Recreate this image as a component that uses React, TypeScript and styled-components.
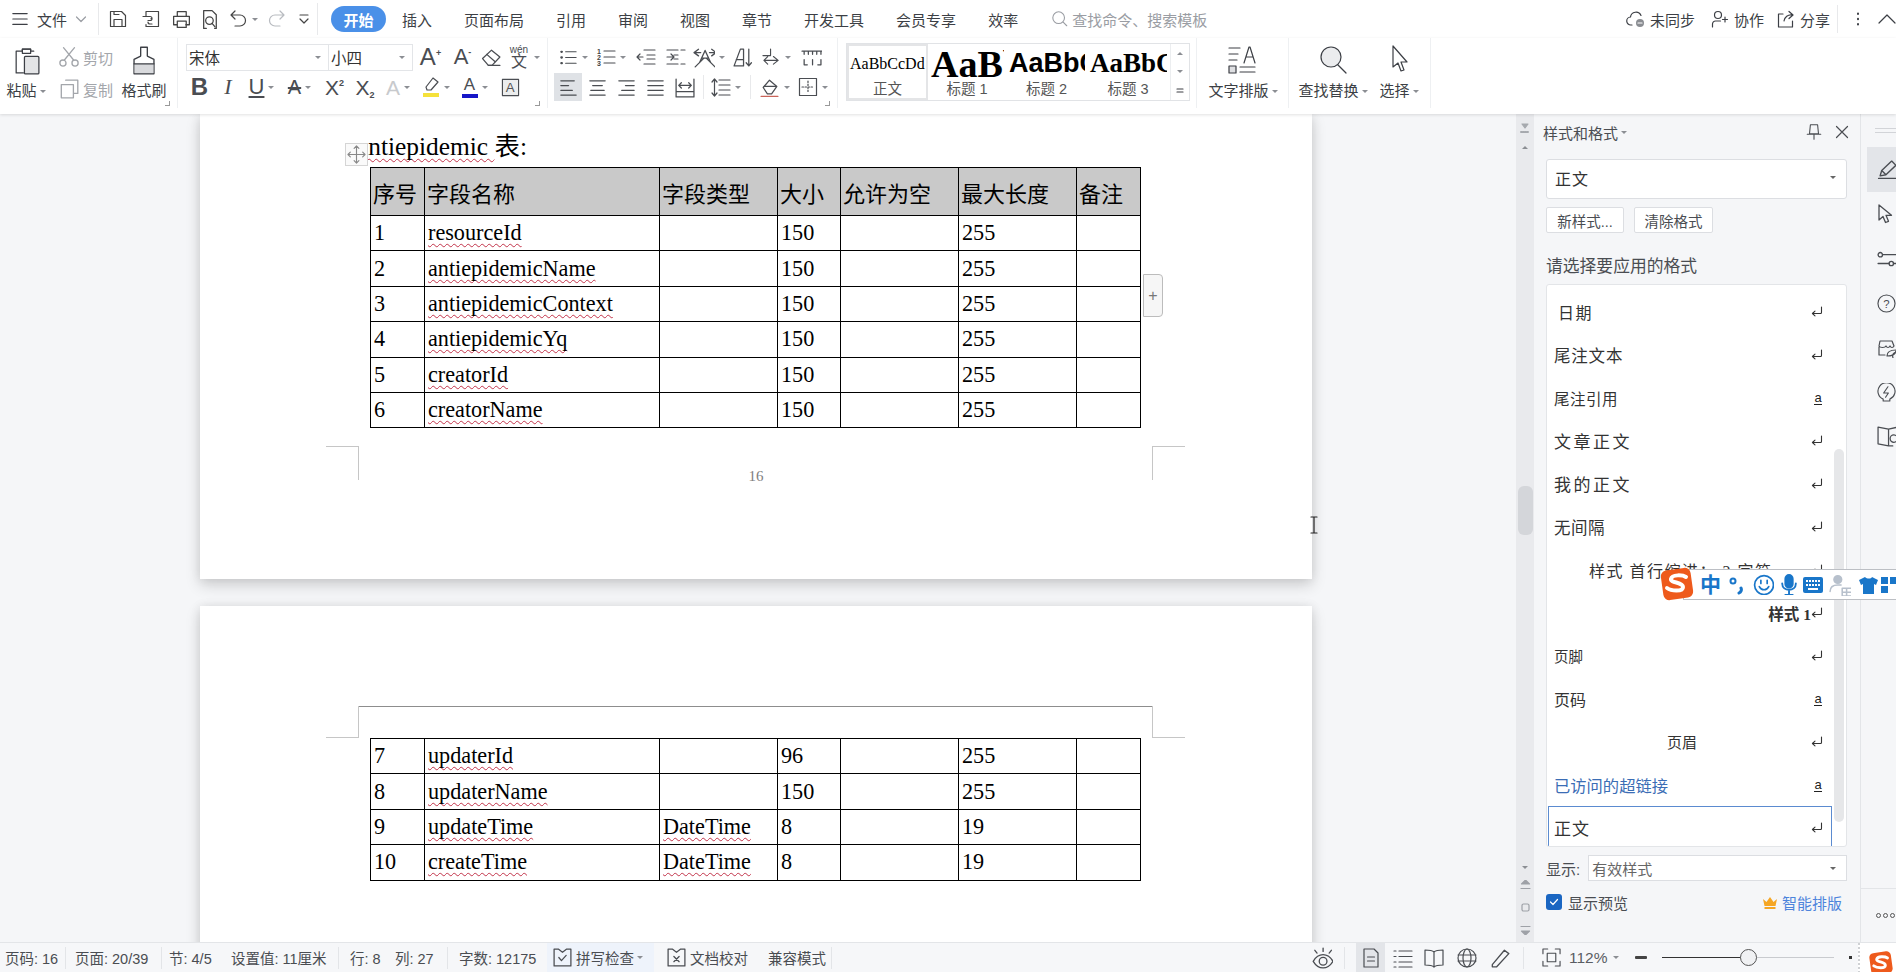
import React from 'react';
import styled, { createGlobalStyle } from 'styled-components';

const UI_FONT = '"Liberation Sans", "Noto Sans CJK SC", sans-serif';
const DOC_FONT = '"Liberation Serif", "Noto Sans CJK SC", serif';

const GlobalStyle = createGlobalStyle`
  html, body { margin: 0; padding: 0; background: #f5f6f8; }
  body { font-family: ${UI_FONT}; color: #3c3f45; }
  * { box-sizing: border-box; }
  svg { display: block; flex: none; }
  svg text { font-family: ${UI_FONT}; }
`;

const Window = styled.div`
  position: relative;
  width: 1896px;
  height: 972px;
  overflow: hidden;
  display: flex;
  flex-direction: column;
`;

/* ---------- title / tab bar ---------- */
const TabBar = styled.div`
  height: 38px;
  background: #fff;
  display: flex;
  align-items: center;
  font-size: 15px;
  color: #3c3f45;
  flex: none;
`;

const FileMenu = styled.div`
  width: 99px;
  height: 32px;
  padding-left: 11px;
  display: flex;
  align-items: center;
  gap: 8px;
  border-right: 1px solid #e8e9eb;
`;

const QuickTool = styled.div<{ $w: number; $muted?: boolean }>`
  width: ${p => p.$w}px;
  display: flex;
  align-items: center;
  justify-content: center;
  gap: 3px;
  color: ${p => (p.$muted ? '#b8bbc0' : '#444')};
`;

const QuickGroup = styled.div`
  display: flex;
  align-items: center;
  width: 219px;
  height: 32px;
  padding-left: 3px;
  border-right: 1px solid #e8e9eb;
`;

const ActiveTab = styled.div`
  margin-left: 13px;
  width: 55px;
  height: 26px;
  border-radius: 13px;
  background: #4a90e8;
  color: #fff;
  font-weight: 700;
  display: flex;
  align-items: center;
  justify-content: center;
`;

const Tab = styled.div`
  padding: 0 16px;
  white-space: nowrap;
`;

const SearchHint = styled.div`
  margin-left: 17px;
  display: flex;
  align-items: center;
  gap: 3px;
  color: #9a9da3;
`;

const TitleActions = styled.div`
  margin-left: auto;
  display: flex;
  align-items: center;
  height: 32px;
`;

const TitleAction = styled.div<{ $w: number }>`
  width: ${p => p.$w}px;
  display: flex;
  align-items: center;
  gap: 4px;
  white-space: nowrap;
`;

const TitleSep = styled.div`
  width: 1px;
  height: 28px;
  background: #e8e9eb;
  margin: 0 13px 0 8px;
`;

const TitleGap = styled.span`
  width: 13px;
`;

/* ---------- ribbon ---------- */
const Ribbon = styled.div`
  height: 76px;
  background: #fff;
  display: flex;
  flex: none;
  position: relative;
  z-index: 2;
  box-shadow: 0 1px 3px rgba(0, 0, 0, 0.12);
  font-size: 15px;
  color: #3c3f45;
`;

const RibbonGroup = styled.div<{ $w: number; $pad?: number }>`
  position: relative;
  width: ${p => p.$w}px;
  padding-left: ${p => p.$pad ?? 0}px;
  height: 70px;
  border-right: 1px solid #eef0f2;
  flex: none;
`;

const GroupCorner = styled.span`
  position: absolute;
  right: 7px;
  bottom: 2px;
  width: 5px;
  height: 5px;
  border-right: 1px solid #999;
  border-bottom: 1px solid #999;
`;

const ToolRows = styled.div`
  padding-top: 6px;
  display: flex;
  flex-direction: column;
  gap: 4px;
`;

const ToolRow = styled.div<{ $tall?: boolean }>`
  height: ${p => (p.$tall ? 70 : 26)}px;
  display: flex;
  align-items: ${p => (p.$tall ? 'flex-start' : 'center')};
`;

const Tool = styled.div<{ $w: number; $active?: boolean }>`
  width: ${p => p.$w}px;
  height: 28px;
  display: flex;
  align-items: center;
  justify-content: center;
  gap: 4px;
  color: #4a4d52;
  background: ${p => (p.$active ? '#dfe2e6' : 'transparent')};
  flex: none;
`;

const ToolSep = styled.div<{ $w: number }>`
  width: ${p => p.$w}px;
  height: 26px;
  position: relative;
  &::after {
    content: '';
    position: absolute;
    left: 50%;
    top: 1px;
    bottom: 1px;
    width: 1px;
    background: #e8e9eb;
  }
`;

const Caret = styled.span<{ $color?: string; $up?: boolean }>`
  width: 0;
  height: 0;
  flex: none;
  border-left: 3px solid transparent;
  border-right: 3px solid transparent;
  border-top: 3px solid ${p => p.$color ?? '#8b8e93'};
  transform: ${p => (p.$up ? 'rotate(180deg)' : 'none')};
`;

const DocScrollUp = styled(Caret)`
  margin-top: 12px;
`;

const FontBox = styled.div<{ $w: number; $divider?: boolean }>`
  width: ${p => p.$w}px;
  height: 27px;
  background: #fff;
  border: 1px solid #e3e5e8;
  border-left: ${p => (p.$divider ? 'none' : '1px solid #e3e5e8')};
  display: flex;
  align-items: center;
  justify-content: space-between;
  padding: 0 7px 0 2px;
  font-size: 15.5px;
  color: #333;
`;

const Glyph = styled.span<{ $size: number; $bold?: boolean; $italic?: boolean; $serif?: boolean; $color?: string }>`
  font-family: ${p => (p.$serif ? DOC_FONT : UI_FONT)};
  font-size: ${p => p.$size}px;
  font-weight: ${p => (p.$bold ? 700 : 400)};
  font-style: ${p => (p.$italic ? 'italic' : 'normal')};
  color: ${p => p.$color ?? '#4a4d52'};
  line-height: 1;
  white-space: nowrap;
  position: relative;
`;

const Sup = styled.sup`
  font-size: 9px;
  font-weight: 700;
  vertical-align: 9px;
  line-height: 0;
`;

const Sub = styled.sub`
  font-size: 9px;
  font-weight: 700;
  vertical-align: -3px;
  line-height: 0;
`;

const BarGlyph = styled.span`
  display: flex;
  flex-direction: column;
  align-items: center;
  line-height: 1;
`;

const ColorBar = styled.span<{ $c: string }>`
  display: block;
  width: 16px;
  height: 4px;
  margin-top: 1px;
  background: ${p => p.$c};
`;

const WenBox = styled.span`
  display: flex;
  flex-direction: column;
  align-items: center;
  width: 22px;
  line-height: 1;
  font-size: 10px;
  color: #4a4d52;
`;

const WenChar = styled.span`
  font-size: 16px;
  line-height: 14px;
`;

const ClipGrid = styled.div`
  height: 70px;
  display: grid;
  grid-template-columns: 52px 62px 60px;
`;

const BigTool = styled.div<{ $w?: number }>`
  width: ${p => (p.$w ? `${p.$w}px` : 'auto')};
  display: flex;
  flex-direction: column;
  align-items: center;
  padding-top: 7px;
  height: 70px;
  flex: none;
`;

const BigIcon = styled.div`
  height: 31px;
  display: flex;
  align-items: flex-start;
  justify-content: center;
`;

const BigLabel = styled.div`
  margin-top: 5px;
  line-height: 20px;
  white-space: nowrap;
  display: flex;
  align-items: center;
  gap: 3px;
`;

const SmallTools = styled.div`
  display: flex;
  flex-direction: column;
  gap: 8px;
  padding-top: 7px;
  padding-left: 6px;
`;

const SmallTool = styled.div`
  height: 24px;
  display: flex;
  align-items: center;
  gap: 3px;
  color: #a3a6ab;
  white-space: nowrap;
`;

const Gallery = styled.div`
  margin: 5px 0 0 8px;
  width: 344px;
  height: 58px;
  border: 1px solid #e1e3e6;
  display: flex;
`;

const StyleCell = styled.div<{ $w: number; $current?: boolean }>`
  width: ${p => p.$w}px;
  height: 100%;
  border: ${p => (p.$current ? '2px solid #e4e5e7' : '2px solid transparent')};
  display: flex;
  flex-direction: column;
  align-items: center;
  overflow: hidden;
  flex: none;
`;

const StylePreview = styled.div<{ $size: number; $sans?: boolean }>`
  height: 36px;
  width: 100%;
  padding-left: 1px;
  display: flex;
  align-items: center;
  overflow: hidden;
  white-space: nowrap;
  font-family: ${p => (p.$sans ? UI_FONT : DOC_FONT)};
  font-weight: ${p => (p.$size > 20 ? 700 : 400)};
  font-size: ${p => p.$size}px;
  color: #000;
`;

const StyleName = styled.div`
  font-size: 14.5px;
  line-height: 17px;
  color: #555;
`;

const GalleryScroll = styled.div`
  margin-left: auto;
  width: 19px;
  border-left: 1px solid #eceef0;
  display: grid;
  grid-template-rows: 1fr 1fr 1fr;
  align-items: center;
  justify-items: center;
`;

/* ---------- work area ---------- */
const Work = styled.div`
  flex: 1;
  min-height: 0;
  display: flex;
`;

const DocArea = styled.div`
  position: relative;
  width: 1516px;
  overflow: hidden;
  background: #f5f6f8;
  padding-left: 200px;
  display: flex;
  flex-direction: column;
  gap: 27px;
`;

const Page = styled.div<{ $h: number; $top: number }>`
  position: relative;
  width: 1112px;
  height: ${p => p.$h}px;
  padding: ${p => p.$top}px 0 0 170px;
  background: #fff;
  flex: none;
  box-shadow: 0 6px 14px rgba(0, 0, 0, 0.16), 0 0 10px rgba(0, 0, 0, 0.08);
`;

const HeadingLine = styled.div`
  margin-left: -13px;
  height: 35px;
  font-family: ${DOC_FONT};
  font-size: 25.4px;
  line-height: 28px;
  color: #000;
  white-space: nowrap;
`;

const Misspelt = styled.span`
  text-decoration: underline wavy #c2334a 1px;
  text-underline-offset: 3px;
  text-decoration-skip-ink: none;
`;

const MoveHandle = styled.div`
  position: absolute;
  left: 145px;
  top: 29px;
  width: 23px;
  height: 23px;
  background: #fafafa;
  border: 1px solid #d5d5d5;
  display: flex;
  align-items: center;
  justify-content: center;
  color: #888;
`;

const DocTable = styled.table`
  border-collapse: collapse;
  table-layout: fixed;
  width: 770px;
  font-family: ${DOC_FONT};
  font-size: 22.2px;
  color: #000;
`;

const HeadCell = styled.th`
  height: 48px;
  background: #c9c9c9;
  border: 1px solid #000;
  padding: 0 0 0 2px;
  text-align: left;
  font-weight: 400;
  font-size: 22px;
  white-space: nowrap;
  overflow: hidden;
`;

const Cell = styled.td`
  height: 35.4px;
  border: 1px solid #000;
  padding: 0 0 0 3px;
  line-height: 30px;
  white-space: nowrap;
`;

const AddColumn = styled.div`
  position: absolute;
  left: 943px;
  top: 160px;
  width: 20px;
  height: 43px;
  background: #f6f6f6;
  border: 1px solid #bcbcbc;
  border-radius: 0 4px 4px 0;
  display: flex;
  align-items: center;
  justify-content: center;
  color: #777;
  font-size: 16px;
`;

const CropMark = styled.div<{ $x: number; $y: number; $h: number; $flip?: boolean; $under?: boolean }>`
  position: absolute;
  left: ${p => p.$x}px;
  top: ${p => p.$y}px;
  width: 33px;
  height: ${p => p.$h}px;
  ${p => (p.$under ? 'border-bottom' : 'border-top')}: 1px solid #c6c6c6;
  ${p => (p.$flip ? 'border-left' : 'border-right')}: 1px solid #c6c6c6;
`;

const HeaderRule = styled.div`
  position: absolute;
  left: 158px;
  top: 100px;
  width: 794px;
  height: 1px;
  background: #8d8d8d;
`;

const PageNumber = styled.div`
  margin: 38px 0 0 -170px;
  text-align: center;
  font-family: ${DOC_FONT};
  font-size: 15px;
  line-height: 20px;
  color: #808080;
`;

const TextCursor = styled.div`
  position: absolute;
  left: 1108px;
  top: 402px;
  color: #222;
`;

const DocScroll = styled.div`
  width: 18px;
  flex: none;
  background: #e9eaed;
  display: flex;
  flex-direction: column;
  align-items: center;
  padding-top: 9px;
`;

const ScrollThumb = styled.div`
  width: 15px;
  height: 49px;
  margin-top: 337px;
  border-radius: 6px;
  background: #d4d6da;
`;

const ScrollFoot = styled.div`
  margin-top: auto;
  padding-bottom: 7px;
  display: flex;
  flex-direction: column;
  align-items: center;
  gap: 11px;
  color: #9ea1a7;
`;

/* ---------- styles panel ---------- */
const Panel = styled.div`
  width: 326px;
  flex: none;
  background: #f5f6f8;
  padding: 0 13px 0 12px;
  display: flex;
  flex-direction: column;
  font-size: 15px;
`;

const PanelHeader = styled.div`
  height: 36px;
  margin-bottom: 9px;
  margin-left: -3px;
  display: flex;
  align-items: center;
  gap: 3px;
  color: #4a4d52;
`;

const PanelHeaderTools = styled.div`
  margin-left: auto;
  display: flex;
  align-items: center;
  gap: 12px;
  margin-right: -2px;
`;

const StyleSelect = styled.div`
  height: 40px;
  background: #fff;
  border: 1px solid #dcdee2;
  border-radius: 3px;
  padding: 0 10px 3px 8px;
  display: flex;
  align-items: center;
  justify-content: space-between;
  font-size: 16px;
  letter-spacing: 1px;
  color: #333;
`;

const PanelButtons = styled.div`
  margin-top: 8px;
  display: flex;
  gap: 10px;
`;

const PanelButton = styled.div<{ $w: number }>`
  width: ${p => p.$w}px;
  height: 26px;
  background: #fff;
  border: 1px solid #dcdee2;
  border-radius: 2px;
  display: flex;
  align-items: center;
  justify-content: center;
  font-size: 14.5px;
  color: #4a4d52;
`;

const PanelLabel = styled.div`
  margin-top: 24px;
  height: 20px;
  margin-bottom: 7px;
  font-size: 16.8px;
  line-height: 20px;
  color: #4a4d52;
  white-space: nowrap;
`;

const StyleList = styled.div`
  position: relative;
  height: 563px;
  background: #fff;
  border: 1px solid #e3e5e8;
  border-radius: 3px;
  padding: 5px 14px 0 1px;
  overflow: hidden;
`;

const ListScrollbar = styled.div`
  position: absolute;
  right: 2px;
  top: 164px;
  width: 10px;
  height: 373px;
  border-radius: 5px;
  background: #e6e7e9;
`;

const StyleRow = styled.div<{ $selected?: boolean }>`
  height: 43px;
  padding: 0 8px 0 5px;
  display: flex;
  align-items: center;
  border: 1px solid ${p => (p.$selected ? '#5b8bd0' : 'transparent')};
  color: #333;
`;

const StyleRowName = styled.div<{
  $size: number;
  $ls?: number;
  $indent?: number;
  $right?: boolean;
  $bold?: boolean;
  $color?: string;
}>`
  flex: 1;
  font-family: ${DOC_FONT};
  font-size: ${p => p.$size}px;
  letter-spacing: ${p => p.$ls ?? 0}px;
  padding-left: ${p => p.$indent ?? 0}px;
  text-align: ${p => (p.$right ? 'right' : 'left')};
  font-weight: ${p => (p.$bold ? 700 : 400)};
  color: ${p => p.$color ?? '#333'};
  white-space: nowrap;
`;

const CharMark = styled.span`
  width: 8px;
  margin-right: 1px;
  text-align: center;
  font-size: 13px;
  line-height: 13px;
  color: #222;
  border-bottom: 1px solid #222;
`;

const ShowRow = styled.div`
  margin-top: 8px;
  height: 26px;
  display: flex;
  align-items: center;
  gap: 8px;
  color: #4a4d52;
`;

const ShowSelect = styled.div`
  flex: 1;
  height: 26px;
  background: #fff;
  border: 1px solid #dcdee2;
  padding: 0 10px 0 3px;
  display: flex;
  align-items: center;
  justify-content: space-between;
  color: #666;
`;

const PreviewRow = styled.div`
  margin-top: 12px;
  height: 18px;
  display: flex;
  align-items: center;
  color: #4a4d52;
`;

const CheckBox = styled.span`
  width: 16px;
  height: 16px;
  border-radius: 3px;
  background: #1a66c2;
  margin-right: 6px;
  display: flex;
  align-items: center;
  justify-content: center;
  color: #fff;
`;

const SmartLayout = styled.div`
  margin-left: auto;
  margin-right: 5px;
  display: flex;
  align-items: center;
  gap: 4px;
  color: #4d84dc;
`;

/* ---------- right rail ---------- */
const Rail = styled.div`
  width: 36px;
  flex: none;
  background: #f5f6f8;
  border-left: 1px solid #e3e5e8;
  display: flex;
  flex-direction: column;
  overflow: hidden;
  padding-top: 14px;
  color: #4a4d52;
`;

const RailGrip = styled.div`
  margin-left: 14px;
  height: 5px;
  width: 30px;
  border-top: 1px solid #d2d4d8;
  border-bottom: 1px solid #d2d4d8;
  margin-bottom: 14px;
`;

const RailItem = styled.div<{ $active?: boolean }>`
  margin-left: 6px;
  height: 44.6px;
  width: 40px;
  padding-left: 10px;
  display: flex;
  align-items: center;
  background: ${p => (p.$active ? '#e3e5e9' : 'transparent')};
  flex: none;
`;

const RailFoot = styled.div`
  margin-top: auto;
  height: 54px;
  border-top: 1px solid #e3e5e8;
  padding: 24px 0 0 15px;
  display: flex;
  gap: 2px;
`;

const RailDot = styled.span`
  width: 5px;
  height: 5px;
  border-radius: 50%;
  border: 1px solid #555;
  flex: none;
`;

/* ---------- status bar ---------- */
const StatusBar = styled.div`
  height: 30px;
  flex: none;
  background: #f6f7f9;
  border-top: 1px solid #e3e5e8;
  display: flex;
  align-items: center;
  padding-left: 5px;
  font-size: 14.5px;
  color: #4a4d52;
  position: relative;
  z-index: 2;
`;

const StatusItem = styled.div<{ $w: number; $pad?: number; $sep?: boolean; $on?: boolean }>`
  width: ${p => p.$w}px;
  height: ${p => (p.$on ? '29px' : '22px')};
  padding-left: ${p => p.$pad ?? 0}px;
  display: flex;
  align-items: center;
  gap: 3px;
  white-space: nowrap;
  flex: none;
  border-right: ${p => (p.$sep ? '1px solid #e3e5e8' : 'none')};
  background: ${p => (p.$on ? '#eef3fb' : 'transparent')};
`;

const StatusTools = styled.div`
  margin-left: auto;
  display: flex;
  align-items: center;
  height: 29px;
`;

const ViewButton = styled.div<{ $w: number; $active?: boolean; $sep?: boolean; $pad?: number }>`
  width: ${p => p.$w}px;
  height: ${p => (p.$active ? '29px' : '22px')};
  display: flex;
  align-items: center;
  justify-content: center;
  padding-left: ${p => p.$pad ?? 0}px;
  background: ${p => (p.$active ? '#e3e5e9' : 'transparent')};
  border-right: ${p => (p.$sep ? '1px solid #e3e5e8' : 'none')};
  margin-left: ${p => (p.$active ? 11 : 0)}px;
  flex: none;
`;

const ZoomValue = styled.div`
  margin-left: 4px;
  width: 64px;
  display: flex;
  align-items: center;
  gap: 5px;
  font-size: 15.5px;
  color: #5a5d63;
`;

const ZoomMinus = styled.span`
  width: 12px;
  height: 3px;
  border-radius: 1px;
  background: #444;
  margin-left: 2px;
`;

const ZoomTrack = styled.div`
  position: relative;
  margin-left: 15px;
  width: 172px;
  height: 1px;
  background: #c9cbcf;
`;

const ZoomFill = styled.div`
  height: 1px;
  background: #333;
`;

const ZoomThumb = styled.span`
  position: absolute;
  top: -8px;
  width: 17px;
  height: 17px;
  margin-left: -8px;
  border-radius: 50%;
  background: #f0f1f3;
  border: 1px solid #555;
`;

const ZoomPlusDot = styled.span`
  width: 3px;
  height: 3px;
  background: #333;
  margin: 0 0 0 15px;
`;

const TrayTail = styled.div`
  margin-left: 6px;
  width: 38px;
  height: 30px;
  background: #fff;
  border-left: 2px dotted #cfd1d4;
  padding: 7px 0 0 8px;
  overflow: hidden;
`;

/* ---------- floating IME bar ---------- */
const ImeBar = styled.div`
  position: absolute;
  left: 1683px;
  top: 569px;
  width: 220px;
  height: 31px;
  background: #fff;
  border: 1px solid #bcbfc4;
  display: flex;
  align-items: center;
  padding-left: 16px;
  z-index: 3;
`;

const ImeLogo = styled.div`
  position: absolute;
  left: 1659px;
  top: 566px;
  z-index: 4;
`;

const ImeChar = styled.span`
  width: 22px;
  font-size: 21px;
  line-height: 1;
  font-weight: 700;
  color: #1976c9;
`;

const ImeSlot = styled.span<{ $w: number; $color?: string }>`
  width: ${p => p.$w}px;
  flex: none;
  display: flex;
  align-items: center;
  justify-content: center;
  color: ${p => p.$color ?? '#1976c9'};
`;

/* ---------- icons ---------- */
type IconProps = { s?: number; h?: number; vb?: string; sw?: number; children: React.ReactNode };

const Ico = ({ s = 20, h, vb = '0 0 20 20', sw = 1.2, children }: IconProps) => (
  <svg
    width={s}
    height={h ?? s}
    viewBox={vb}
    fill="none"
    stroke="currentColor"
    strokeWidth={sw}
    strokeLinecap="round"
    strokeLinejoin="round"
  >
    {children}
  </svg>
);

const lines = (rows: [number, number, number][]) =>
  rows.map(([x1, x2, y]) => `M${x1} ${y}H${x2}`).join(' ');

const AlignIcon = ({ rows }: { rows: [number, number, number][] }) => (
  <Ico s={19}>
    <path d={lines(rows)} strokeWidth={1.5} />
  </Ico>
);

const ReturnMark = () => (
  <Ico s={12} vb="0 0 12 12" sw={1.1}>
    <path d="M10.5 1v5.5a1 1 0 0 1-1 1H1.5M4 5.2L1.4 7.5 4 9.8" />
  </Ico>
);

const SogouLogo = ({ size }: { size: number }) => (
  <svg width={size} height={size} viewBox="0 0 36 36">
    <rect x="3" y="3" width="30" height="30" rx="6" fill="#ee5a1c" transform="rotate(-8 18 18)" />
    <path
      d="M27 11c-3-2-14-3-15 2-.8 4 12 3 12 8 0 5-12 4-16 1"
      fill="none"
      stroke="#fff"
      strokeWidth="4"
      strokeLinecap="round"
    />
  </svg>
);

/* ---------- data ---------- */
const columns = [54, 235, 118, 63, 118, 118, 64];
const heads = ['序号', '字段名称', '字段类型', '大小', '允许为空', '最大长度', '备注'];

type Field = [string, string, string, string, string];

const firstRows: Field[] = [
  ['1', 'resourceId', '', '150', '255'],
  ['2', 'antiepidemicName', '', '150', '255'],
  ['3', 'antiepidemicContext', '', '150', '255'],
  ['4', 'antiepidemicYq', '', '150', '255'],
  ['5', 'creatorId', '', '150', '255'],
  ['6', 'creatorName', '', '150', '255'],
];

const secondRows: Field[] = [
  ['7', 'updaterId', '', '96', '255'],
  ['8', 'updaterName', '', '150', '255'],
  ['9', 'updateTime', 'DateTime', '8', '19'],
  ['10', 'createTime', 'DateTime', '8', '19'],
];

type StyleItem = {
  name: string;
  size: number;
  ls?: number;
  indent?: number;
  right?: boolean;
  bold?: boolean;
  color?: string;
  char?: boolean;
  selected?: boolean;
};

const styleItems: StyleItem[] = [
  { name: '日期', size: 16, ls: 1.5, indent: 4 },
  { name: '尾注文本', size: 16.5, ls: 0.8 },
  { name: '尾注引用', size: 15.5, ls: 0.5, char: true },
  { name: '文章正文', size: 17, ls: 2.5 },
  { name: '我的正文', size: 17, ls: 2.5 },
  { name: '无间隔', size: 16.5, ls: 0.5 },
  { name: '样式 首行缩进： 2 字符', size: 16, ls: 1.5, indent: 35 },
  { name: '样式 1', size: 15.5, bold: true, right: true },
  { name: '页脚', size: 14.5 },
  { name: '页码', size: 16, char: true },
  { name: '页眉', size: 15, indent: 113 },
  { name: '已访问的超链接', size: 16.3, color: '#3b6db5', char: true },
  { name: '正文', size: 17, ls: 1, selected: true },
];

const DocColumns = () => (
  <colgroup>
    {columns.map((w, i) => (
      <col key={i} width={w} />
    ))}
  </colgroup>
);

const FieldRows = ({ rows }: { rows: Field[] }) => (
  <tbody>
    {rows.map(([no, name, type, size, max]) => (
      <tr key={no}>
        <Cell>{no}</Cell>
        <Cell>
          <Misspelt>{name}</Misspelt>
        </Cell>
        <Cell>{type && <Misspelt>{type}</Misspelt>}</Cell>
        <Cell>{size}</Cell>
        <Cell />
        <Cell>{max}</Cell>
        <Cell />
      </tr>
    ))}
  </tbody>
);

const zoomPercent = 50;

export default function App() {
  return (
    <Window>
      <GlobalStyle />

      <TabBar>
        <FileMenu>
          <Ico s={18}>
            <path d="M2 4h16M2 10h16M2 16h16" />
          </Ico>
          文件
          <Ico s={12} vb="0 0 12 12">
            <path d="M1.5 4l4.5 4.5L10.500 4" stroke="#9a9da3" />
          </Ico>
        </FileMenu>
        <QuickGroup>
          <QuickTool $w={32}>
            <Ico s={20}>
              <path d="M2.500 2.500h11l4 4v11h-15zM6 17.500v-7h8v7M6 2.500v3h5" />
            </Ico>
          </QuickTool>
          <QuickTool $w={33}>
            <Ico s={20}>
              <path d="M5 7V2.500h12.500v15H5v-2M2 7.500h7a2 2 0 0 1 0 4H7M11 9.500h-1M7 13a2 2 0 0 0 2 2h2" />
            </Ico>
          </QuickTool>
          <QuickTool $w={28}>
            <Ico s={21}>
              <path d="M6 7V2.500h8.500V7M6 15H2.500V7h15v8H14M6 11.500h8.500v6H6z" />
            </Ico>
          </QuickTool>
          <QuickTool $w={30}>
            <Ico s={21}>
              <path d="M6 18.500H3.500v-17h8l4 4v13H14" />
              <circle cx="9" cy="11" r="3.600" />
              <path d="M11.500 13.700l2.800 3.300" />
            </Ico>
          </QuickTool>
          <QuickTool $w={36}>
            <Ico s={20}>
              <path d="M6 2L2 6l4 4M2 6h9a5.500 5.500 0 0 1 0 11H6" />
            </Ico>
            <Caret />
          </QuickTool>
          <QuickTool $w={30} $muted>
            <Ico s={20}>
              <path d="M14 2l4 4-4 4M18 6H9a5.500 5.500 0 0 0 0 11h5" />
            </Ico>
          </QuickTool>
          <QuickTool $w={26}>
            <Ico s={12} vb="0 0 12 12">
              <path d="M2 2h8M2 6l4 4 4-4" />
            </Ico>
          </QuickTool>
        </QuickGroup>
        <ActiveTab>开始</ActiveTab>
        <Tab>插入</Tab>
        <Tab>页面布局</Tab>
        <Tab>引用</Tab>
        <Tab>审阅</Tab>
        <Tab>视图</Tab>
        <Tab>章节</Tab>
        <Tab>开发工具</Tab>
        <Tab>会员专享</Tab>
        <Tab>效率</Tab>
        <SearchHint>
          <Ico s={18}>
            <circle cx="8.500" cy="8.500" r="6.500" />
            <path d="M13.500 13.500l4 4" />
          </Ico>
          查找命令、搜索模板
        </SearchHint>
        <TitleActions>
          <TitleAction $w={84}>
            <Ico s={20}>
              <path d="M6 16H5a4 4 0 0 1-.5-8A5.500 5.500 0 0 1 15 6.500" />
              <circle cx="14" cy="14" r="4" fill="#8a8d92" stroke="none" />
              <path d="M12 14h4" stroke="#fff" />
            </Ico>
            未同步
          </TitleAction>
          <TitleAction $w={66}>
            <Ico s={20}>
              <circle cx="8" cy="6" r="3.500" />
              <path d="M2.500 18v-3a3 3 0 0 1 3-3h5M15 8v5M12.500 10.500h5" />
            </Ico>
            协作
          </TitleAction>
          <TitleAction $w={53}>
            <Ico s={20}>
              <path d="M7 5H2.500v13h14v-6M8 12a7 7 0 0 1 8-6M13 2.500L17 6l-4 3.500" />
            </Ico>
            分享
          </TitleAction>
          <TitleSep />
          <Ico s={14} vb="0 0 14 14">
            <path d="M7 1.500v.5M7 6.800v.5M7 12v.5" strokeWidth={2} />
          </Ico>
          <TitleGap />
          <Ico s={18} vb="0 0 18 18">
            <path d="M1 13l8-8 8 8" />
          </Ico>
        </TitleActions>
      </TabBar>

      <Ribbon>
        <RibbonGroup $w={178}>
          <ClipGrid>
            <BigTool>
              <BigIcon>
                <Ico s={31} vb="0 0 30 30">
                  <path d="M22 6h-3V4h-8v2H5v21h7" />
                  <path d="M11 4h8v4h-8z" />
                  <rect x="13" y="11" width="14" height="17" fill="#e3e4e6" rx="1" />
                </Ico>
              </BigIcon>
              <BigLabel>
                粘贴
                <Caret />
              </BigLabel>
            </BigTool>
            <SmallTools>
              <SmallTool>
                <Ico s={22}>
                  <path d="M5 1.500l9 11M15 1.500l-9 11" />
                  <circle cx="4.500" cy="15.500" r="2.800" />
                  <circle cx="15.500" cy="15.500" r="2.800" />
                </Ico>
                剪切
              </SmallTool>
              <SmallTool>
                <Ico s={22}>
                  <path d="M7 2h11v12h-4M3 6h11v12H3z" />
                </Ico>
                复制
              </SmallTool>
            </SmallTools>
            <BigTool>
              <BigIcon>
                <Ico s={28} h={31} vb="0 0 24 28">
                  <path d="M9 2h6v8l6 3v13H3V13l6-3z" />
                  <path d="M3.500 17h17v8.500h-17z" fill="#d9dadd" stroke="none" />
                  <path d="M3 17h18" />
                </Ico>
              </BigIcon>
              <BigLabel>格式刷</BigLabel>
            </BigTool>
          </ClipGrid>
          <GroupCorner />
        </RibbonGroup>

        <RibbonGroup $w={370} $pad={8}>
          <ToolRows>
            <ToolRow>
              <FontBox $w={143}>
                宋体
                <Caret />
              </FontBox>
              <FontBox $w={84} $divider>
                小四
                <Caret />
              </FontBox>
              <Tool $w={35}>
                <Glyph $size={24}>
                  A<Sup>+</Sup>
                </Glyph>
              </Tool>
              <Tool $w={29}>
                <Glyph $size={22}>
                  A<Sup>-</Sup>
                </Glyph>
              </Tool>
              <Tool $w={29}>
                <Ico s={21}>
                  <path d="M1.500 11L10 3l8 6.500-7.500 8H7z" />
                  <path d="M5.500 7l8 7" />
                  <path d="M7 17.500h11" />
                </Ico>
              </Tool>
              <Tool $w={36}>
                <WenBox>
                  wén
                  <WenChar>文</WenChar>
                </WenBox>
                <Caret />
              </Tool>
            </ToolRow>
            <ToolRow>
              <Tool $w={27}>
                <Glyph $size={24} $bold>
                  B
                </Glyph>
              </Tool>
              <Tool $w={30}>
                <Glyph $size={22} $italic $serif>
                  I
                </Glyph>
              </Tool>
              <Tool $w={37}>
                <Glyph $size={22}>
                  <u>U</u>
                </Glyph>
                <Caret />
              </Tool>
              <Tool $w={39}>
                <Glyph $size={20}>
                  <s>A</s>
                </Glyph>
                <Caret />
              </Tool>
              <Tool $w={31}>
                <Glyph $size={21}>
                  X<Sup>2</Sup>
                </Glyph>
              </Tool>
              <Tool $w={30}>
                <Glyph $size={21}>
                  X<Sub>2</Sub>
                </Glyph>
              </Tool>
              <Tool $w={36}>
                <Glyph $size={21} $color="#c8cacd">
                  A
                </Glyph>
                <Caret />
              </Tool>
              <Tool $w={39}>
                <BarGlyph>
                  <Ico s={18} h={15} vb="0 0 18 15">
                    <path d="M11 1l5 4-7 8H5l-1-3z" />
                  </Ico>
                  <ColorBar $c="#f5e13a" />
                </BarGlyph>
                <Caret />
              </Tool>
              <Tool $w={39}>
                <BarGlyph>
                  <Glyph $size={17}>A</Glyph>
                  <ColorBar $c="#1616c8" />
                </BarGlyph>
                <Caret />
              </Tool>
              <Tool $w={32}>
                <Ico s={19}>
                  <rect x="1.500" y="1.500" width="17" height="17" fill="#eceded" />
                  <text x="5" y="15" fontSize="14" stroke="none" fill="#555">
                    A
                  </text>
                </Ico>
              </Tool>
            </ToolRow>
          </ToolRows>
          <GroupCorner />
        </RibbonGroup>

        <RibbonGroup $w={290} $pad={6}>
          <ToolRows>
            <ToolRow>
              <Tool $w={38}>
                <Ico s={19}>
                  <path d="M7 4h11M7 10h11M7 16h11" />
                  <path d="M2.500 4h.5M2.500 10h.5M2.500 16h.5" strokeWidth={2.400} />
                </Ico>
                <Caret />
              </Tool>
              <Tool $w={38}>
                <Ico s={20}>
                  <path d="M8 4h11M8 10h11M8 16h11" />
                  <text x="1" y="7" fontSize="7" stroke="none" fill="#444" fontWeight="700">
                    1
                  </text>
                  <text x="1" y="13" fontSize="7" stroke="none" fill="#444" fontWeight="700">
                    2
                  </text>
                  <text x="1" y="19" fontSize="7" stroke="none" fill="#444" fontWeight="700">
                    3
                  </text>
                </Ico>
                <Caret />
              </Tool>
              <Tool $w={31}>
                <Ico s={20}>
                  <path d="M8 3h11M11 8h8M11 12h8M8 17h11M7 10H1M4 7l-3 3 3 3" />
                </Ico>
              </Tool>
              <Tool $w={29}>
                <Ico s={20}>
                  <path d="M1 3h11M8 8h4M8 12h4M1 17h11M1 10h6M5 7l3 3-3 3M15 3h4M15 17h4" />
                </Ico>
              </Tool>
              <Tool $w={37}>
                <Ico s={22}>
                  <path d="M6 15l5-11 5 11M8 11h6M1 6l4-3M1 6l4 3M1 6h6M21 6l-4-3M21 6l-4 3M21 6h-6M2 19l8-8M20 19l-8-8" />
                </Ico>
                <Caret />
              </Tool>
              <Tool $w={31}>
                <Ico s={21}>
                  <path d="M2 18L8 2h3v16zM4 12h7M16 2v16M13.500 15l2.500 3 2.500-3" />
                </Ico>
              </Tool>
              <Tool $w={37}>
                <Ico s={19}>
                  <path d="M9 1v7H1M17 13H2M6 9l-4 4 4 4M12 9l5 4-5 4" />
                </Ico>
                <Caret />
              </Tool>
              <Tool $w={33}>
                <Ico s={21}>
                  <path d="M1 4h19M3 4v3M7 4v3M11 4v3M15 4v3M19 4v3M3 12v5h3M19 12v5h-3M11 12v5" />
                </Ico>
              </Tool>
            </ToolRow>
            <ToolRow>
              <Tool $w={28} $active>
                <AlignIcon rows={[[2, 16, 3], [2, 10, 8], [2, 14, 13], [2, 18, 18]]} />
              </Tool>
              <Tool $w={30}>
                <AlignIcon rows={[[2, 18, 3], [5, 15, 8], [3, 17, 13], [2, 18, 18]]} />
              </Tool>
              <Tool $w={29}>
                <AlignIcon rows={[[2, 18, 3], [9, 18, 8], [5, 18, 13], [2, 18, 18]]} />
              </Tool>
              <Tool $w={28}>
                <AlignIcon rows={[[2, 18, 3], [2, 18, 8], [2, 18, 13], [2, 18, 18]]} />
              </Tool>
              <Tool $w={30}>
                <Ico s={21}>
                  <path d="M2 2v17M19 2v17M2 14h17M2 19h17M5 8h11M7 5.500L4.500 8 7 10.500M14 5.500L16.500 8 14 10.500" />
                </Ico>
              </Tool>
              <ToolSep $w={8} />
              <Tool $w={38}>
                <Ico s={20}>
                  <path d="M8 3h11M8 8h11M8 13h11M8 18h11M3.500 2v17M1 5l2.500-3L6 5M1 16l2.500 3L6 16" />
                </Ico>
                <Caret />
              </Tool>
              <ToolSep $w={10} />
              <Tool $w={38}>
                <Ico s={21}>
                  <path d="M4 10l6-7 7 6-5 7H8z" />
                  <path d="M2 18.500h16" stroke="#c9645a" />
                  <path d="M5 9h11" />
                </Ico>
                <Caret />
              </Tool>
              <Tool $w={39}>
                <Ico s={20}>
                  <rect x="1.500" y="1.500" width="17" height="17" />
                  <path d="M10 4v12M4 10h12" strokeDasharray="1.500 1.500" />
                </Ico>
                <Caret />
              </Tool>
            </ToolRow>
          </ToolRows>
          <GroupCorner />
        </RibbonGroup>

        <RibbonGroup $w={359}>
          <Gallery>
            <StyleCell $w={81} $current>
              <StylePreview $size={16}>AaBbCcDd</StylePreview>
              <StyleName>正文</StyleName>
            </StyleCell>
            <StyleCell $w={78}>
              <StylePreview $size={38}>AaBbC</StylePreview>
              <StyleName>标题 1</StyleName>
            </StyleCell>
            <StyleCell $w={81}>
              <StylePreview $size={27} $sans>
                AaBbC
              </StylePreview>
              <StyleName>标题 2</StyleName>
            </StyleCell>
            <StyleCell $w={82}>
              <StylePreview $size={27}>AaBbCc</StylePreview>
              <StyleName>标题 3</StyleName>
            </StyleCell>
            <GalleryScroll>
              <Caret $up />
              <Caret />
              <Ico s={10} vb="0 0 10 10">
                <path d="M2 3h6M2 6h6" />
              </Ico>
            </GalleryScroll>
          </Gallery>
        </RibbonGroup>

        <RibbonGroup $w={92}>
          <BigTool $w={92}>
            <BigIcon>
              <Ico s={30} vb="0 0 30 30">
                <path d="M1 3h11M1 9h9M1 15h8M16 18L21 2h1l5 16M18 12h7" />
                <rect x="1" y="21" width="7" height="7" fill="#dedfe2" />
                <path d="M12 22h15M12 27h15" />
              </Ico>
            </BigIcon>
            <BigLabel>
              文字排版
              <Caret />
            </BigLabel>
          </BigTool>
        </RibbonGroup>

        <RibbonGroup $w={142} $pad={4}>
          <ToolRow $tall>
            <BigTool $w={80}>
              <BigIcon>
                <Ico s={30} vb="0 0 30 30">
                  <circle cx="13" cy="12" r="10" fill="#ebecee" />
                  <path d="M20 20l8 8" />
                </Ico>
              </BigIcon>
              <BigLabel>
                查找替换
                <Caret />
              </BigLabel>
            </BigTool>
            <BigTool $w={52}>
              <BigIcon>
                <Ico s={28} vb="0 0 24 28">
                  <path d="M6 1v21l5-4 3 8 3-1-3-8h6z" />
                </Ico>
              </BigIcon>
              <BigLabel>
                选择
                <Caret />
              </BigLabel>
            </BigTool>
          </ToolRow>
        </RibbonGroup>
      </Ribbon>

      <Work>
        <DocArea>
          <Page $h={465} $top={18}>
            <HeadingLine>
              <Misspelt>antiepidemic </Misspelt>表:
            </HeadingLine>
            <MoveHandle>
              <Ico s={19}>
                <path d="M10 1v18M1 10h18M7.500 3.500L10 1l2.500 2.500M7.500 16.500L10 19l2.500-2.500M3.500 7.500L1 10l2.500 2.500M16.500 7.500L19 10l-2.500 2.500" />
              </Ico>
            </MoveHandle>
            <DocTable>
              <DocColumns />
              <thead>
                <tr>
                  {heads.map(h => (
                    <HeadCell key={h}>{h}</HeadCell>
                  ))}
                </tr>
              </thead>
              <FieldRows rows={firstRows} />
            </DocTable>
            <AddColumn>+</AddColumn>
            <PageNumber>16</PageNumber>
            <CropMark $x={126} $y={332} $h={34} />
            <CropMark $x={952} $y={332} $h={34} $flip />
            <TextCursor>
              <Ico s={12} h={18} vb="0 0 12 18">
                <path d="M3 1h6M3 17h6M6 1v16" />
              </Ico>
            </TextCursor>
          </Page>
          <Page $h={400} $top={132}>
            <HeaderRule />
            <CropMark $x={126} $y={100} $h={32} $under />
            <CropMark $x={952} $y={100} $h={32} $under $flip />
            <DocTable>
              <DocColumns />
              <FieldRows rows={secondRows} />
            </DocTable>
          </Page>
        </DocArea>

        <DocScroll>
          <Ico s={12} h={11} vb="0 0 12 11">
            <path d="M3 1h6L6 5z" fill="#a6a9ae" stroke="#a6a9ae" />
            <path d="M2 9h8" stroke="#a6a9ae" strokeDasharray="1 1" strokeWidth={2} />
          </Ico>
          <DocScrollUp $up />
          <ScrollThumb />
          <ScrollFoot>
            <Caret />
            <Ico s={11} vb="0 0 11 11">
              <path d="M5.500 0l4 4h-8zM1 8.500h9" fill="#9ea1a7" stroke="#9ea1a7" />
            </Ico>
            <Ico s={11} vb="0 0 11 11">
              <rect x="2" y="2" width="7" height="7" rx="1.500" />
            </Ico>
            <Ico s={11} vb="0 0 11 11">
              <path d="M5.500 11l4-4h-8zM1 2.500h9" fill="#9ea1a7" stroke="#9ea1a7" />
            </Ico>
          </ScrollFoot>
        </DocScroll>

        <Panel>
          <PanelHeader>
            样式和格式
            <Caret />
            <PanelHeaderTools>
              <Ico s={18}>
                <path d="M6 2h8l1 10H5zM2.500 12.500h15M10 12.500V18" />
              </Ico>
              <Ico s={14} vb="0 0 14 14">
                <path d="M1.500 1.500l11 11M12.500 1.500l-11 11" />
              </Ico>
            </PanelHeaderTools>
          </PanelHeader>
          <StyleSelect>
            正文
            <Caret $color="#666" />
          </StyleSelect>
          <PanelButtons>
            <PanelButton $w={78}>新样式...</PanelButton>
            <PanelButton $w={79}>清除格式</PanelButton>
          </PanelButtons>
          <PanelLabel>请选择要应用的格式</PanelLabel>
          <StyleList>
            {styleItems.map(item => (
              <StyleRow key={item.name} $selected={item.selected}>
                <StyleRowName
                  $size={item.size}
                  $ls={item.ls}
                  $indent={item.indent}
                  $right={item.right}
                  $bold={item.bold}
                  $color={item.color}
                >
                  {item.name}
                </StyleRowName>
                {item.char ? <CharMark>a</CharMark> : <ReturnMark />}
              </StyleRow>
            ))}
            <ListScrollbar />
          </StyleList>
          <ShowRow>
            显示:
            <ShowSelect>
              有效样式
              <Caret $color="#666" />
            </ShowSelect>
          </ShowRow>
          <PreviewRow>
            <CheckBox>
              <Ico s={10} vb="0 0 10 10">
                <path d="M1.500 5l2.500 2.500 4.500-5" />
              </Ico>
            </CheckBox>
            显示预览
            <SmartLayout>
              <svg width="16" height="13" viewBox="0 0 16 13">
                <path d="M1 3l3.500 3L8 1l3.500 5L15 3l-1.500 7h-11zM2.500 11h11v2h-11z" fill="#f5a623" />
              </svg>
              智能排版
            </SmartLayout>
          </PreviewRow>
        </Panel>

        <Rail>
          <RailGrip />
          <RailItem $active>
            <Ico s={21} sw={1.3}>
              <path d="M3 16l1.500-5L14 2l4 4-9.500 9zM1.500 18.500h17M4.500 11l4 4" />
            </Ico>
          </RailItem>
          <RailItem>
            <Ico s={20} sw={1.3}>
              <path d="M2 1v15l4-3.500 2.500 6 3-1.200-2.500-6h5.500z" />
            </Ico>
          </RailItem>
          <RailItem>
            <Ico s={22}>
              <circle cx="3" cy="7" r="2" />
              <path d="M5 7h17M1 15h10M15 15h7" />
              <circle cx="13" cy="15" r="2" />
            </Ico>
          </RailItem>
          <RailItem>
            <Ico s={19}>
              <circle cx="10" cy="10" r="9" />
              <text x="6.500" y="14.500" fontSize="12" stroke="none" fill="#4a4d52">
                ?
              </text>
            </Ico>
          </RailItem>
          <RailItem>
            <Ico s={20}>
              <path d="M2 8l1-5h12l2 5c-1 2-3 2-4 0-1 2-3 2-4 0-1 2-6 2-7 0zM2 9v8h6" />
              <path d="M10 18c0-4 3-6 9-6 0 4-3 6-9 6zM16 20c-1-3 0-5 3-6" />
            </Ico>
          </RailItem>
          <RailItem>
            <Ico s={19}>
              <path d="M6.500 17a9 9 0 1 1 7 0v2h-7z" />
              <path d="M11.500 4L7 10.500h5L9 15" />
            </Ico>
          </RailItem>
          <RailItem>
            <Ico s={21}>
              <path d="M11 3L1 1v16l10 2zM11 3l9-2v5M11 19h4" />
              <circle cx="16" cy="12" r="3.500" />
              <path d="M18.500 14.500l2 2" />
            </Ico>
          </RailItem>
          <RailFoot>
            <RailDot />
            <RailDot />
            <RailDot />
          </RailFoot>
        </Rail>
      </Work>

      <StatusBar>
        <StatusItem $w={61} $sep>
          页码: 16
        </StatusItem>
        <StatusItem $w={96} $pad={9} $sep>
          页面: 20/39
        </StatusItem>
        <StatusItem $w={69} $pad={7}>
          节: 4/5
        </StatusItem>
        <StatusItem $w={108} $sep>
          设置值: 11厘米
        </StatusItem>
        <StatusItem $w={56} $pad={11}>
          行: 8
        </StatusItem>
        <StatusItem $w={53} $sep>
          列: 27
        </StatusItem>
        <StatusItem $w={99} $pad={11}>
          字数: 12175
        </StatusItem>
        <StatusItem $w={107} $pad={5} $on>
          <Ico s={21}>
            <path d="M2 2h4l4 3 4-3h4v16H2z" />
            <path d="M6.500 10l2.500 3 4.500-5" />
          </Ico>
          拼写检查
          <Caret />
        </StatusItem>
        <StatusItem $w={106} $pad={12}>
          <Ico s={21}>
            <path d="M2 2h4l4 3 4-3h4v16H2z" />
            <path d="M7.500 9l5 5M12.500 9l-5 5" />
          </Ico>
          文档校对
        </StatusItem>
        <StatusItem $w={72} $pad={8} $sep>
          兼容模式
        </StatusItem>
        <StatusTools>
          <ViewButton $w={45} $sep>
            <Ico s={22}>
              <path d="M2 13c3-5 6-6 9-6s6 1 9 6c-3 5-6 6-9 6s-6-1-9-6z" />
              <circle cx="11" cy="13" r="3.500" />
              <path d="M11 1v3M3.500 3l2 2.500M18.500 3l-2 2.500" />
            </Ico>
          </ViewButton>
          <ViewButton $w={29} $active>
            <Ico s={20}>
              <path d="M3 1h10l4 4v14H3zM6.500 9h7M6.500 13h7" />
            </Ico>
          </ViewButton>
          <ViewButton $w={36}>
            <Ico s={20}>
              <path d="M6 3h13M6 8.500h13M6 14h13M6 19h13M1 3h2M1 8.500h2M1 14h2M1 19h2" />
            </Ico>
          </ViewButton>
          <ViewButton $w={26}>
            <Ico s={20}>
              <path d="M10 4C8 2 4 2 1 2v15c3 0 7 0 9 2 2-2 6-2 9-2V2c-3 0-7 0-9 2zM10 4v15" />
            </Ico>
          </ViewButton>
          <ViewButton $w={39}>
            <Ico s={20}>
              <circle cx="10" cy="10" r="9" />
              <ellipse cx="10" cy="10" rx="4" ry="9" />
              <path d="M1 7h18M1 13h18" />
            </Ico>
          </ViewButton>
          <ViewButton $w={27}>
            <Ico s={22}>
              <path d="M3 16L14 3l4 3L7 18H3zM1 21h18" />
            </Ico>
          </ViewButton>
          <ViewButton $w={11} $sep />
          <ViewButton $w={41} $pad={14}>
            <Ico s={19}>
              <path d="M1 6V1h5M14 1h5v5M19 14v5h-5M6 19H1v-5" />
              <rect x="5.500" y="5.500" width="9" height="9" />
            </Ico>
          </ViewButton>
          <ZoomValue>
            112%
            <Caret />
          </ZoomValue>
          <ZoomMinus />
          <ZoomTrack>
            <ZoomFill style={{ width: `${zoomPercent}%` }} />
            <ZoomThumb style={{ left: `${zoomPercent}%` }} />
          </ZoomTrack>
          <ZoomPlusDot />
          <TrayTail>
            <SogouLogo size={26} />
          </TrayTail>
        </StatusTools>
      </StatusBar>

      <ImeLogo>
        <SogouLogo size={36} />
      </ImeLogo>
      <ImeBar>
        <ImeChar>中</ImeChar>
        <ImeSlot $w={29}>
          <Ico s={20} sw={2}>
            <circle cx="6" cy="6" r="2.500" />
            <path d="M14 13c1 2 0 4-2 5" strokeWidth={3} />
          </Ico>
        </ImeSlot>
        <ImeSlot $w={25}>
          <Ico s={21} sw={1.600}>
            <circle cx="10.500" cy="10.500" r="9" />
            <path d="M6 12c2 4 7 4 9 0M7.500 6v3M13.500 6v3" />
          </Ico>
        </ImeSlot>
        <ImeSlot $w={24}>
          <Ico s={21} sw={1.800}>
            <rect x="7" y="1" width="7" height="12" rx="3.500" fill="currentColor" />
            <path d="M4 9c0 8 13 8 13 0M10.500 15v5M7 20h7" />
          </Ico>
        </ImeSlot>
        <ImeSlot $w={25}>
          <svg width="20" height="16" viewBox="0 0 20 16">
            <rect width="20" height="16" rx="2" fill="#1976c9" />
            <path d="M3 4h14M3 8h14" stroke="#fff" strokeWidth="2" strokeDasharray="2 1" />
            <path d="M5 12h10" stroke="#fff" strokeWidth="2" />
          </svg>
        </ImeSlot>
        <ImeSlot $w={30} $color="#b7c0cc">
          <Ico s={22} sw={1.400}>
            <circle cx="8" cy="5" r="3.500" fill="currentColor" />
            <path d="M1 16c0-4 3-6 7-6h3M12 13h9v7h-9zM12 16.500h9M16 13v7" />
          </Ico>
        </ImeSlot>
        <ImeSlot $w={26}>
          <svg width="19" height="18" viewBox="0 0 19 18">
            <path d="M6 1L0 4l2 5 2-1v10h11V8l2 1 2-5-6-3c-1 2-5 2-7 0z" fill="#1976c9" />
          </svg>
        </ImeSlot>
        <ImeSlot $w={16}>
          <svg width="16" height="16" viewBox="0 0 16 16" fill="#1976c9">
            <rect width="7" height="7" />
            <rect y="9" width="7" height="7" />
            <rect x="9" width="7" height="7" />
          </svg>
        </ImeSlot>
      </ImeBar>
    </Window>
  );
}
